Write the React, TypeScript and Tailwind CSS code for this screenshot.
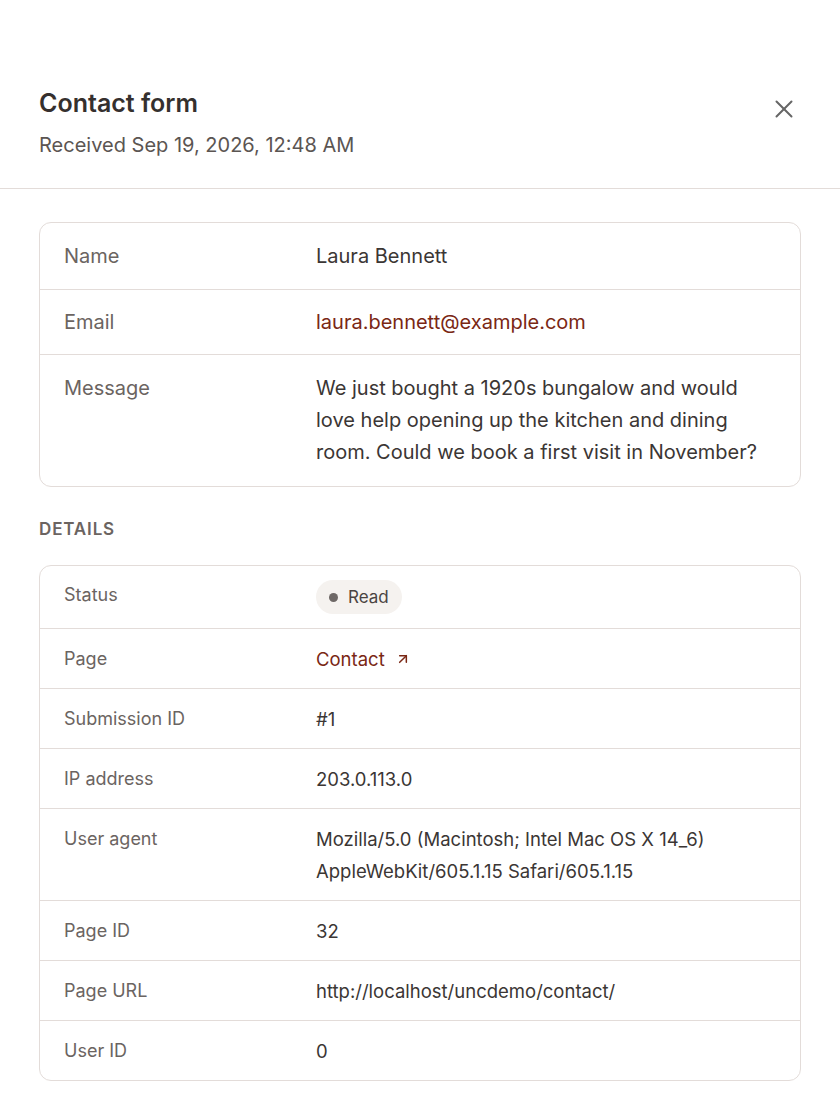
import { X, ArrowUpRight } from 'lucide-react';

const font = { fontFamily: 'Inter, "Noto Sans", sans-serif' };

const details: { label: string; value: React.ReactNode }[] = [
  { label: 'Page', value: <a className="inline-flex items-center gap-[10px] text-[#7a2714]">Contact <ArrowUpRight size={16} strokeWidth={2.25} /></a> },
  { label: 'Submission ID', value: '#1' },
  { label: 'IP address', value: '203.0.113.0' },
  { label: 'User agent', value: 'Mozilla/5.0 (Macintosh; Intel Mac OS X 14_6) AppleWebKit/605.1.15 Safari/605.1.15' },
  { label: 'Page ID', value: '32' },
  { label: 'Page URL', value: 'http://localhost/uncdemo/contact/' },
  { label: 'User ID', value: '0' },
];

export default function App() {
  return (
    <div className="min-h-[1118px] w-[840px] bg-white text-[#3b3634]" style={font}>
      <div className="flex items-start justify-between border-b border-[#e3dcd9] px-[39px] pt-[87px] pb-[29px]">
        <div>
          <h1 className="text-[25px] leading-8 font-semibold text-[#35302e]">Contact form</h1>
          <p className="mt-[12px] text-[20px] leading-7 text-[#5b5552]">Received Sep 19, 2026, 12:48 AM</p>
        </div>
        <button className="mt-[7px] mr-[2px] text-[#666]"><X size={30} strokeWidth={1.6} /></button>
      </div>

      <div className="px-[39px] pt-[33px]">
        <div className="rounded-[12px] border border-[#e3dcd9] text-[20px] leading-8">
          <div className="flex px-6 py-[17px]">
            <div className="w-[252px] shrink-0 text-[#6b6461]">Name</div>
            <div>Laura Bennett</div>
          </div>
          <div className="flex border-t border-[#e3dcd9] px-6 py-[16px]">
            <div className="w-[252px] shrink-0 text-[#6b6461]">Email</div>
            <div className="text-[#7a2714]">laura.bennett@example.com</div>
          </div>
          <div className="flex border-t border-[#e3dcd9] px-6 pt-[17px] pb-[18px]">
            <div className="w-[252px] shrink-0 text-[#6b6461]">Message</div>
            <div className="max-w-[452px]">We just bought a 1920s bungalow and would love help opening up the kitchen and dining room. Could we book a first visit in November?</div>
          </div>
        </div>

        <h2 className="mt-[30px] mb-[24px] text-[17px] leading-6 font-semibold tracking-[0.05em] text-[#6b6461]">DETAILS</h2>

        <div className="rounded-[12px] border border-[#e3dcd9] text-[18px] leading-8">
          <div className="flex items-center px-6 py-[14px]">
            <div className="w-[252px] shrink-0 -translate-y-[2px] text-[#6b6461]">Status</div>
            <div className="inline-flex h-[34px] items-center gap-[10px] rounded-full bg-[#f5f2ef] px-[13px] text-[17px] text-[#4a4442]">
              <span className="h-[9px] w-[9px] rounded-full bg-[#6e6866]" />
              Read
            </div>
          </div>
          {details.map((d) => (
            <div key={d.label} className="flex border-t border-[#e3dcd9] px-6 py-[13.5px]">
              <div className="w-[252px] shrink-0 text-[#6b6461]">{d.label}</div>
              <div className="max-w-[430px] text-[18.5px]">{d.value}</div>
            </div>
          ))}
        </div>
      </div>
    </div>
  );
}
